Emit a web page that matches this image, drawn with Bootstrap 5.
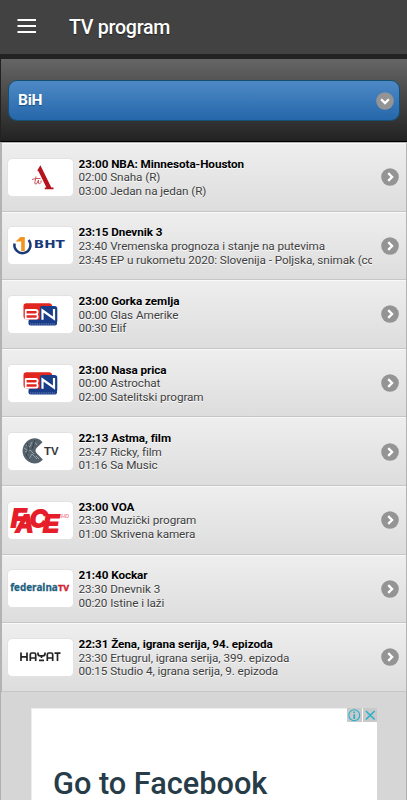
<!DOCTYPE html>
<html lang="bs">
<head>
<meta charset="utf-8">
<meta name="viewport" content="width=device-width, initial-scale=1">
<title>TV program</title>
<link href="https://cdn.jsdelivr.net/npm/bootstrap@5.3.0/dist/css/bootstrap.min.css" rel="stylesheet">
<style>
body{font-family:Roboto,"Liberation Sans",sans-serif;background:#d6d6d6;height:800px;overflow:hidden;color:#333}
.topbar{height:54px;background:#424242;padding-left:17px}
.topbar svg{margin-top:-2px}
.topbar h1{font-size:19.6px;font-weight:500;color:#fff;margin:0 0 0 32px;padding-top:1px;line-height:54px;letter-spacing:-.26px;text-shadow:0 1px 1px #222}
.chooser{height:88px;border-top:5px solid #222;border-left:1px solid #222;border-bottom:1px solid #000;background:linear-gradient(#666,#222);padding:21px 7px 0 7px}
.picker{height:41px;border:1px solid #145072;border-radius:9px;background:linear-gradient(#4e89c5,#2567ab);color:#fff;font-weight:700;font-size:15.5px;letter-spacing:-.2px;padding:1px 5px 0 9px;text-shadow:0 1px 1px #194b7e}
.picker:hover{color:#fff}
.channels{border:solid #b3b3b3;border-width:1px 1px 0 2px}
.channel{height:68.6px;border-bottom:1px solid #c6c6c6;border-top:1px solid #f8f8f8;background:linear-gradient(#eee,#ddd);padding:0 7px 0 5px;color:#3d3d3d}
.logo-tile{width:66.5px;height:39px;background:#fff;border:1px solid #e2e2e2;border-radius:5px;display:block;flex:none}
.logo-tile svg{display:block;margin:-1px;width:66px;height:39px}
.shows{width:293px;margin-left:5px;padding-top:1.8px;font-size:11.7px;letter-spacing:-.06px;line-height:13.6px;white-space:nowrap;overflow:hidden;text-shadow:0 1px 0 #fff}
.shows strong{font-weight:700;color:#000}
.arrow{width:18px;height:18px;flex:none;display:block}
.lower{border:solid #b0b0b0;border-width:0 1px;height:110px;padding:16px 29px 0 30px}
.advert{background:#fff;height:100px;border:1px solid #eee;border-width:1px 0 0 1px}
.ad-tools{gap:1px;margin-top:-1px}
.ad-tools svg{width:14.5px;height:14.5px;background:#c9c9c9}
.advert p{font-size:30.7px;font-weight:500;color:#263c48;line-height:36px;margin:44px 0 0 21px;white-space:nowrap}
</style>
<script src="https://cdn.jsdelivr.net/npm/bootstrap@5.3.0/dist/js/bootstrap.bundle.min.js"></script>
</head>
<body>
<svg width="0" height="0" class="position-absolute" aria-hidden="true">
<defs>
<symbol id="go" viewBox="0 0 18 18"><circle cx="9" cy="9" r="8.8" fill="#949494"/><path d="M7.2 5.1 11.1 9l-3.9 3.9" fill="none" stroke="#fff" stroke-width="2.3"/></symbol>
<symbol id="bn" viewBox="0 0 66 39">
<rect x="21.500" y="24" width="28.500" height="6.500" rx="2" fill="#193d88"/>
<path d="M19.500 8.200H42q3 0 3 2.500v13.800H20q-3.500 0-3.500-3.500V11q0-2.800 3-2.800z" fill="#e1251f"/>
<path d="M35 11h12.500q2.800 0 2.800 2.800V26.500H33V13q0-2 2-2z" fill="#193d88"/>
<path d="M18.500 15h10q2.200 0 2.200 2 0 1.900-1.800 2.200 1.800.3 1.800 2.200 0 2.300-2.200 2.300h-10M19 19.300h10.500M18.700 14.500v9.500" fill="none" stroke="#fff" stroke-width="1.800"/>
<path d="M35.500 24.700V15.500L47 23.700V14" fill="none" stroke="#fff" stroke-width="2.200"/>
<path d="M23 29h25" stroke="#6d84ba" stroke-width="1" stroke-dasharray="1.400 .8"/>
</symbol>
</defs>
</svg>
<header class="topbar d-flex align-items-center">
<svg width="20" height="16" viewBox="0 0 20 16"><path d="M.5 2h18.500M.5 8h18.500M.5 14h18.500" stroke="#fff" stroke-width="2"/></svg>
<h1>TV program</h1>
</header>
<section class="chooser">
<button class="picker btn w-100 d-flex align-items-center justify-content-between" type="button">BiH
<svg class="arrow" viewBox="0 0 18 18"><circle cx="9" cy="9" r="8.800" fill="#949494"/><path d="M5.100 7.200 9 11.100l3.900-3.900" fill="none" stroke="#fff" stroke-width="2.200"/></svg></button>
</section>
<main>
<div class="channels">
<a class="channel d-flex align-items-center text-decoration-none" href="#">
<span class="logo-tile"><svg viewBox="0 0 66 39"><path d="M30.300 12.500 33.400 7.300 44.300 29.600h2.200v1.700h-8.700v-1.700h1.600L31.600 13.500z" fill="#b5121b"/><path d="M25 21.500q4-1.500 8.500-1M29 18.500l-1.200 6.500q0 1.700 2 .7l1.700-3.700v3.200q1.300 1.500 2.500-.7v-2" fill="none" stroke="#c4454a" stroke-width=".9"/></svg></span>
<div class="shows"><strong>23:00 NBA: Minnesota-Houston</strong><br>02:00 Snaha (R)<br>03:00 Jedan na jedan (R)</div>
<svg class="arrow ms-auto"><use href="#go"/></svg></a>
<a class="channel d-flex align-items-center text-decoration-none" href="#">
<span class="logo-tile"><svg viewBox="0 0 66 39"><path d="M7.600 17.500a8 8 0 1 0 14-3.500" fill="none" stroke="#183a7a" stroke-width="2.500"/><path d="M8.500 15.500 13.500 11h4.300v14.300h-3.600v-9.800z" fill="#f39320"/><text x="26.800" y="21.500" font-family="DejaVu Sans" font-weight="bold" font-size="10" textLength="31" lengthAdjust="spacingAndGlyphs" fill="#183a7a">BHT</text></svg></span>
<div class="shows"><strong>23:15 Dnevnik 3</strong><br>23:40 Vremenska prognoza i stanje na putevima<br>23:45 EP u rukometu 2020: Slovenija - Poljska, snimak (code)</div>
<svg class="arrow ms-auto"><use href="#go"/></svg></a>
<a class="channel d-flex align-items-center text-decoration-none" href="#">
<span class="logo-tile"><svg><use href="#bn"/></svg></span>
<div class="shows"><strong>23:00 Gorka zemlja</strong><br>00:00 Glas Amerike<br>00:30 Elif</div>
<svg class="arrow ms-auto"><use href="#go"/></svg></a>
<a class="channel d-flex align-items-center text-decoration-none" href="#">
<span class="logo-tile"><svg><use href="#bn"/></svg></span>
<div class="shows"><strong>23:00 Nasa prica</strong><br>00:00 Astrochat<br>02:00 Satelitski program</div>
<svg class="arrow ms-auto"><use href="#go"/></svg></a>
<a class="channel d-flex align-items-center text-decoration-none" href="#">
<span class="logo-tile"><svg viewBox="0 0 66 39"><path d="M35.500 10.200C32 5.200 25 4.800 20 9.200c-6 5.500-6 14 0 19.300 5 4.300 12 4 15.800-1L29.500 21q-2-2.500 0-5z" fill="#56626b"/><path d="M19 13l4 2 2-5M18 20l5-2 4 4M22 27l3-5 5 5M27 9l3 4M29 24l3 3M17 16l3 2" fill="none" stroke="#98a5ac" stroke-width=".9"/><path d="M20 11l2 6-3 6 4 5M28 8l-3 9" fill="none" stroke="#36424b"/><text x="37" y="23" font-family="Liberation Sans" font-weight="bold" font-size="11.500" textLength="14.500" lengthAdjust="spacingAndGlyphs" fill="#353539">TV</text></svg></span>
<div class="shows"><strong>22:13 Astma, film</strong><br>23:47 Ricky, film<br>01:16 Sa Music</div>
<svg class="arrow ms-auto"><use href="#go"/></svg></a>
<a class="channel d-flex align-items-center text-decoration-none" href="#">
<span class="logo-tile"><svg viewBox="0 0 66 39"><g font-family="Liberation Sans" font-weight="bold" font-style="italic" font-size="25" fill="#e61e2a" stroke="#e61e2a" stroke-width="1.800"><text x="4" y="25.500">F</text><text x="9" y="31" font-size="24">A</text><text x="23" y="25.500" font-size="24">C</text><text x="36" y="31" font-size="24">E</text><text x="54" y="16.500" font-size="5.500" stroke="none" fill="#f08d94">HD</text></g></svg></span>
<div class="shows"><strong>23:00 VOA</strong><br>23:30 Muzički program<br>01:00 Skrivena kamera</div>
<svg class="arrow ms-auto"><use href="#go"/></svg></a>
<a class="channel d-flex align-items-center text-decoration-none" href="#">
<span class="logo-tile"><svg viewBox="0 0 66 39"><g font-family="Open Sans" font-weight="bold"><text x="3.300" y="21.700" font-size="10.500" fill="#20617f" stroke="#20617f" stroke-width=".3" textLength="47.500" lengthAdjust="spacingAndGlyphs">federalna</text><text x="51" y="21.700" font-size="9" fill="#d3202f" stroke="#d3202f" stroke-width=".4" textLength="11" lengthAdjust="spacingAndGlyphs">TV</text></g></svg></span>
<div class="shows"><strong>21:40 Kockar</strong><br>23:30 Dnevnik 3<br>00:20 Istine i laži</div>
<svg class="arrow ms-auto"><use href="#go"/></svg></a>
<a class="channel d-flex align-items-center text-decoration-none" href="#">
<span class="logo-tile"><svg viewBox="0 0 66 39"><path d="M14 14.500v8.500M20 14.500v8.500M14 18.800h6M23.300 23v-6.500q0-1.500 1.500-1.500h2.400q1.500 0 1.500 1.500V23M23.300 20h5.400M31 14.500v1.300q0 2 2 2h3q2 0 2-2v-1.300M34.500 18v2M32 22.300h5M40.300 23v-6.500q0-1.500 1.500-1.500h2.400q1.500 0 1.500 1.500V23M40.300 20h5.400M47.500 15.200h6M50.500 15.200V23" fill="none" stroke="#242424" stroke-width="1.700"/></svg></span>
<div class="shows"><strong>22:31 Žena, igrana serija, 94. epizoda</strong><br>23:30 Ertugrul, igrana serija, 399. epizoda<br>00:15 Studio 4, igrana serija, 9. epizoda</div>
<svg class="arrow ms-auto"><use href="#go"/></svg></a>
</div>
<section class="lower">
<div class="advert">
<div class="ad-tools d-flex justify-content-end">
<svg viewBox="0 0 15 15"><circle cx="7.500" cy="7.500" r="5.600" fill="none" stroke="#22b1cd" stroke-width="1.100"/><path d="M7.500 6.500v4.800M7.500 3.700v1.600" stroke="#22b1cd" stroke-width="1.700"/></svg>
<svg viewBox="0 0 15 15"><path d="M3 3l9 9M12 3l-9 9" stroke="#22b1cd" stroke-width="1.500"/></svg>
</div>
<p>Go to Facebook</p>
</div>
</section>
</main>
</body>
</html>
